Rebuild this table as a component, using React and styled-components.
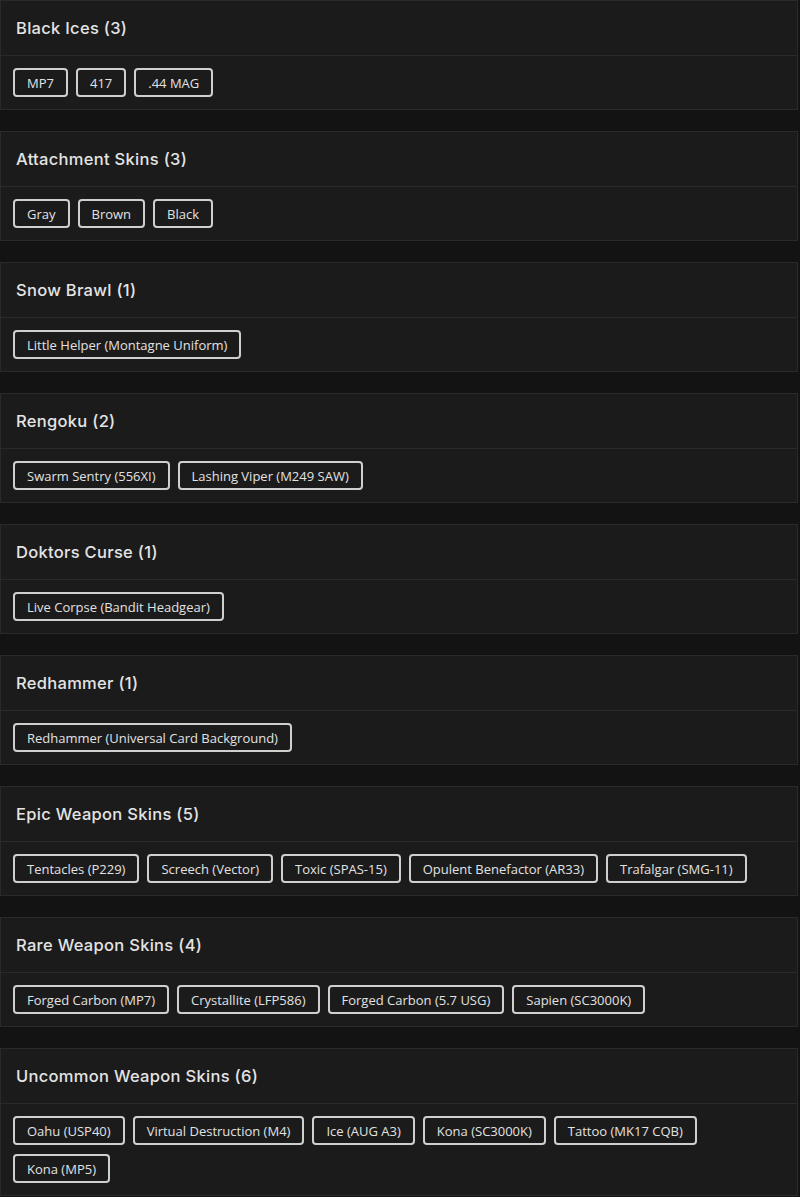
import React from "react";
import styled, { createGlobalStyle } from "styled-components";

const Global = createGlobalStyle`
  html, body { margin: 0; padding: 0; background: #131313; }
  body { font-family: "Open Sans", "Liberation Sans", sans-serif; color: #e4e4e4; }
`;

const Page = styled.div`
  display: flex;
  flex-direction: column;
  gap: 21px;
  padding-right: 2px;
`;

const Card = styled.section`
  background: #1b1b1b;
  border: 1px solid #2a2a2a;
`;

const Header = styled.h2`
  margin: 0;
  padding: 16px 15px;
  font-family: Inter, "Open Sans", sans-serif;
  font-size: 16.5px;
  line-height: 22px;
  font-weight: 500;
  letter-spacing: 0.3px;
  color: #e4e4e4;
  border-bottom: 1px solid #2a2a2a;
`;

const Body = styled.div`
  display: flex;
  flex-wrap: wrap;
  gap: 9px 8px;
  padding: 12px;
`;

const Chip = styled.span`
  display: inline-flex;
  align-items: center;
  height: 29px;
  box-sizing: border-box;
  padding: 0 12px;
  border: 2px solid #cfcfcf;
  border-radius: 4px;
  font-size: 13px;
  color: #e2e2e2;
  white-space: nowrap;
`;

const groups = [
  ["Black Ices", ["MP7", "417", ".44 MAG"]],
  ["Attachment Skins", ["Gray", "Brown", "Black"]],
  ["Snow Brawl", ["Little Helper (Montagne Uniform)"]],
  ["Rengoku", ["Swarm Sentry (556XI)", "Lashing Viper (M249 SAW)"]],
  ["Doktors Curse", ["Live Corpse (Bandit Headgear)"]],
  ["Redhammer", ["Redhammer (Universal Card Background)"]],
  [
    "Epic Weapon Skins",
    ["Tentacles (P229)", "Screech (Vector)", "Toxic (SPAS-15)", "Opulent Benefactor (AR33)", "Trafalgar (SMG-11)"],
  ],
  [
    "Rare Weapon Skins",
    ["Forged Carbon (MP7)", "Crystallite (LFP586)", "Forged Carbon (5.7 USG)", "Sapien (SC3000K)"],
  ],
  [
    "Uncommon Weapon Skins",
    ["Oahu (USP40)", "Virtual Destruction (M4)", "Ice (AUG A3)", "Kona (SC3000K)", "Tattoo (MK17 CQB)", "Kona (MP5)"],
  ],
];

export default function App() {
  return (
    <>
      <Global />
      <Page>
        {groups.map(([title, items]) => (
          <Card key={title}>
            <Header>
              {title} ({items.length})
            </Header>
            <Body>
              {items.map((it) => (
                <Chip key={it}>{it}</Chip>
              ))}
            </Body>
          </Card>
        ))}
      </Page>
    </>
  );
}
